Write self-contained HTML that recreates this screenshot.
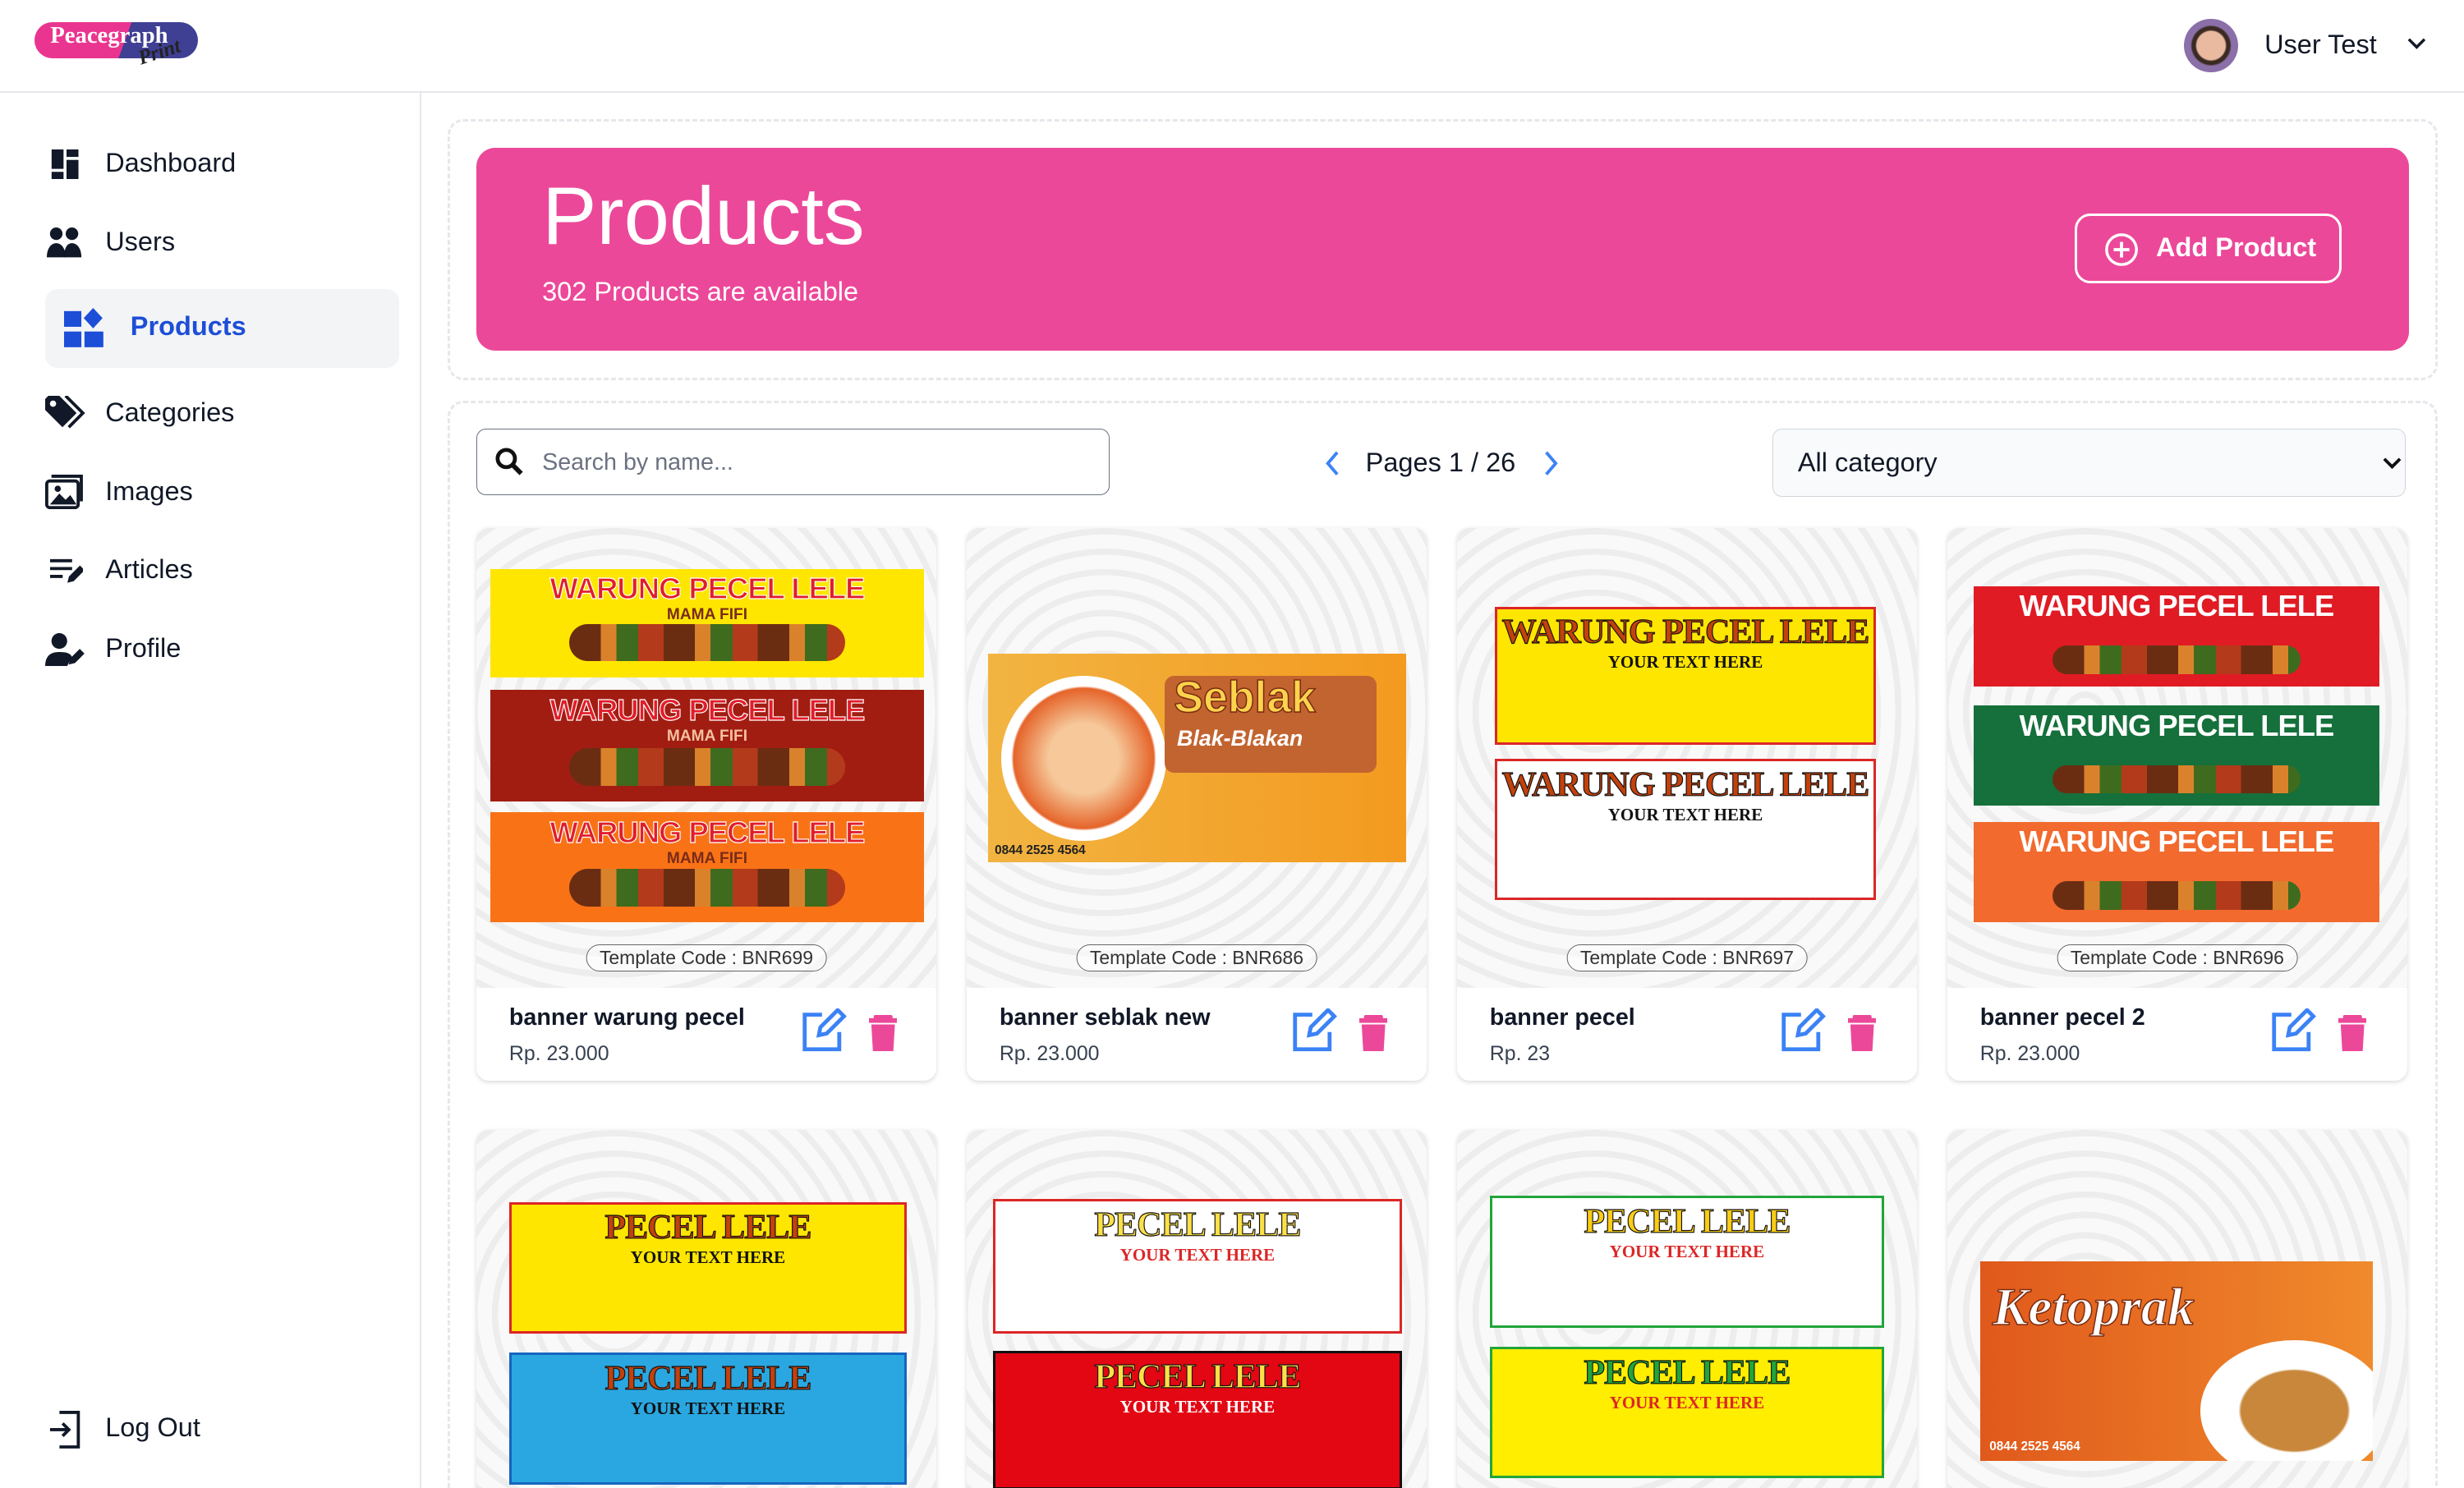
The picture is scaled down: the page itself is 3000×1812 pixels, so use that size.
<!DOCTYPE html>
<html><head><meta charset="utf-8"><style>
html,body{margin:0;padding:0;background:#fff;overflow:hidden}
#root{zoom:1.9133;width:1568px;height:947px;position:relative;overflow:hidden;font-family:"Liberation Sans",Arial,sans-serif;color:#111827}
.abs{position:absolute}
.nav{position:absolute;left:67px;font-size:17px;color:#111827}
.card{position:absolute;width:293px;height:352px;border-radius:8px;background:#fff;box-shadow:0 1px 3px rgba(0,0,0,.15);overflow:hidden}
.img{position:absolute;left:0;top:0;width:100%;height:293px;background:#f3f3f3;
background-image:repeating-radial-gradient(circle at 30% 40%,#f9f9f9 0 9px,#ededed 9px 13px)}
.pill{position:absolute;top:265px;left:50%;transform:translateX(-50%);border:1px solid #666;border-radius:10px;font-size:12px;padding:1px 8px;color:#333;white-space:nowrap;background:rgba(255,255,255,.5)}
.t{position:absolute;left:21px;top:303px;font-size:15px;font-weight:bold}
.p{position:absolute;left:21px;top:327px;font-size:13px;color:#374151}
.bn{position:absolute;overflow:hidden;text-align:center;font-weight:bold;font-family:"Liberation Sans",sans-serif}
.bn b{display:block;color:#e11d2a;font-size:19px;-webkit-text-stroke:.6px #fff;margin-top:2px;letter-spacing:-.5px}
.bn i{display:block;font-style:normal;color:#7a2b1a;font-size:10px}
.food{position:absolute;left:50px;right:50px;height:24px;bottom:10px;background:repeating-linear-gradient(90deg,#6b2d12 0 20px,#d9822b 20px 30px,#3f6b1e 30px 44px,#b33a1a 44px 60px);border-radius:12px}
.pc b{color:#c2410c;-webkit-text-stroke:.6px #111;font-size:22px;font-family:"Liberation Serif",serif}
.pc i{color:#111;font-size:11px;font-family:"Liberation Serif",serif;font-weight:bold}
</style></head><body><div id="root">
<div class="abs" style="left:0;top:58px;width:1568px;height:1px;background:#e5e7eb"></div>
<div class="abs" style="left:22px;top:14px;width:104px;height:23px;border-radius:12px;background:linear-gradient(110deg,#e9358f 0 55%,#3f3f94 55%)"></div>
<div class="abs" style="left:32px;top:14px;font-family:'Liberation Serif',serif;font-weight:bold;color:#fff;font-size:15px">Peacegraph</div>
<div class="abs" style="left:88px;top:26px;font-family:'Liberation Serif',serif;font-style:italic;font-weight:bold;color:#222;font-size:13px;transform:rotate(-18deg)">Print</div>
<div class="abs" style="left:1390px;top:12px;width:34px;height:34px;border-radius:50%;background:radial-gradient(circle at 50% 50%,#e9b9a0 0 9px,#3a2a22 10px 12px,#8b6fa8 13px)"></div>
<div class="abs" style="left:1441px;top:19px;font-size:17px">User Test</div>
<svg class="abs" style="left:1531px;top:23px" width="14" height="10" viewBox="0 0 14 10"><path d="M2 2l5 5 5-5" fill="none" stroke="#111827" stroke-width="1.8"/></svg>
<div class="abs" style="left:267px;top:59px;width:1px;height:888px;background:#e5e7eb"></div>
<svg class="abs" style="left:32px;top:95px" width="19" height="19" viewBox="0 0 18 20"><rect x="0" y="0" width="8" height="13" fill="#111827"/><rect x="10" y="0" width="8" height="5" fill="#111827"/><rect x="0" y="15" width="8" height="5" fill="#111827"/><rect x="10" y="7" width="8" height="13" fill="#111827"/></svg>
<div class="nav" style="top:94px">Dashboard</div>
<svg class="abs" style="left:30px;top:145px" width="23" height="19" viewBox="0 0 23 19"><circle cx="6" cy="4" r="4" fill="#111827"/><circle cx="16" cy="4" r="4" fill="#111827"/><path d="M0 19c0-6 3-9 6-9s6 3 6 9z" fill="#111827"/><path d="M11 19c0-6 2-9 5-9s6 3 6 9z" fill="#111827"/></svg>
<div class="nav" style="top:144px">Users</div>
<div class="abs" style="left:29px;top:184px;width:225px;height:50px;border-radius:8px;background:#f3f4f6"></div>
<svg class="abs" style="left:41px;top:196px" width="25" height="25" viewBox="0 0 25 25"><rect x="0" y="2" width="11" height="10" fill="#1d4ed8"/><rect x="0" y="15" width="11" height="10" fill="#1d4ed8"/><rect x="13" y="15" width="12" height="10" fill="#1d4ed8"/><path d="M18.5 0l6 6.5-6 6.5-6-6.5z" fill="#1d4ed8"/></svg>
<div class="nav" style="top:198px;left:83px;color:#1d4ed8;font-weight:bold">Products</div>
<svg class="abs" style="left:29px;top:252px" width="26" height="22" viewBox="0 0 26 22"><path d="M0 2v7l11 11 9-9L9 0H2z" fill="#111827"/><path d="M13 0l11 11-9 9" fill="none" stroke="#111827" stroke-width="2"/><circle cx="5" cy="5" r="2" fill="#fff"/></svg>
<div class="nav" style="top:253px">Categories</div>
<svg class="abs" style="left:29px;top:302px" width="25" height="22" viewBox="0 0 25 22"><rect x="1" y="4" width="20" height="17" rx="2" fill="none" stroke="#111827" stroke-width="2"/><path d="M4 1h19v16" fill="none" stroke="#111827" stroke-width="2"/><path d="M3 19l6-7 4 4 3-3 4 6z" fill="#111827"/><circle cx="8" cy="9" r="2" fill="#111827"/></svg>
<div class="nav" style="top:303px">Images</div>
<svg class="abs" style="left:32px;top:355px" width="21" height="17" viewBox="0 0 21 17"><path d="M0 2h14M0 7h14M0 12h8" stroke="#111827" stroke-width="2"/><path d="M11 16l1-4 7-7 3 3-7 7z" fill="#111827"/></svg>
<div class="nav" style="top:353px">Articles</div>
<svg class="abs" style="left:29px;top:403px" width="26" height="21" viewBox="0 0 26 21"><circle cx="9" cy="5" r="5" fill="#111827"/><path d="M0 21c0-7 4-9 9-9s7 1 8 3l-3 6z" fill="#111827"/><path d="M15 20l1-4 6-6 3 3-6 6z" fill="#111827"/></svg>
<div class="nav" style="top:403px">Profile</div>
<svg class="abs" style="left:31px;top:898px" width="20" height="24" viewBox="0 0 20 24"><path d="M7 1h12v22H7" fill="none" stroke="#111827" stroke-width="2"/><path d="M1 12h12M9 8l4 4-4 4" fill="none" stroke="#111827" stroke-width="2"/></svg>
<div class="nav" style="top:899px">Log Out</div>
<div class="abs" style="left:285px;top:76px;width:1263px;height:163px;border:2px dashed #e5e7eb;border-radius:10px"></div>
<div class="abs" style="left:303px;top:94px;width:1230px;height:129px;border-radius:12px;background:#ec4899"></div>
<div class="abs" style="left:345px;top:108px;color:#fff;font-size:52px">Products</div>
<div class="abs" style="left:345px;top:176px;color:#fff;font-size:17px">302 Products are available</div>
<div class="abs" style="left:1320px;top:136px;width:167px;height:41px;border:2px solid #fff;border-radius:10px"></div>
<svg class="abs" style="left:1339px;top:148px" width="22" height="22" viewBox="0 0 22 22"><circle cx="11" cy="11" r="9.5" fill="none" stroke="#fff" stroke-width="1.8"/><path d="M11 6v10M6 11h10" stroke="#fff" stroke-width="2"/></svg>
<div class="abs" style="left:1372px;top:148px;color:#fff;font-size:17px;font-weight:bold">Add Product</div>
<div class="abs" style="left:285px;top:255px;width:1263px;height:720px;border:2px dashed #e5e7eb;border-radius:10px"></div>
<div class="abs" style="left:303px;top:273px;width:402px;height:41px;border:1px solid #6b7280;border-radius:6px"></div>
<svg class="abs" style="left:315px;top:285px" width="18" height="18" viewBox="0 0 18 18"><circle cx="7" cy="7" r="5.5" fill="none" stroke="#111" stroke-width="2.5"/><path d="M11 11l5.5 5.5" stroke="#111" stroke-width="3"/></svg>
<div class="abs" style="left:345px;top:286px;font-size:15px;color:#6b7280">Search by name...</div>
<svg class="abs" style="left:841px;top:286px" width="14" height="18" viewBox="0 0 14 18"><path d="M10 2L4 9l6 7" fill="none" stroke="#3b82f6" stroke-width="2"/></svg>
<div class="abs" style="left:869px;top:285px;font-size:17px">Pages 1 / 26</div>
<svg class="abs" style="left:980px;top:286px" width="14" height="18" viewBox="0 0 14 18"><path d="M4 2l6 7-6 7" fill="none" stroke="#3b82f6" stroke-width="2"/></svg>
<div class="abs" style="left:1128px;top:273px;width:402px;height:42px;border:1px solid #d1d5db;border-radius:6px;background:#f9fafb"></div>
<div class="abs" style="left:1144px;top:285px;font-size:17px">All category</div>
<svg class="abs" style="left:1516px;top:290px" width="12" height="9" viewBox="0 0 12 9"><path d="M1 2l5 5 5-5" fill="none" stroke="#111" stroke-width="2"/></svg>

<div class="card" style="left:303px;top:336px"><div class="img">
 <div class="bn" style="left:9px;top:26px;width:276px;height:69px;background:#ffe600"><b>WARUNG PECEL LELE</b><i>MAMA FIFI</i><div class="food"></div></div>
 <div class="bn" style="left:9px;top:103px;width:276px;height:71px;background:#a11d12"><b>WARUNG PECEL LELE</b><i style="color:#f5c0a0">MAMA FIFI</i><div class="food"></div></div>
 <div class="bn" style="left:9px;top:181px;width:276px;height:70px;background:#f97316"><b>WARUNG PECEL LELE</b><i>MAMA FIFI</i><div class="food"></div></div>
 <div class="pill">Template Code : BNR699</div></div>
 <div class="t">banner warung pecel</div><div class="p">Rp. 23.000</div></div>

<div class="card" style="left:615px;top:336px"><div class="img">
 <div class="bn" style="left:14px;top:80px;width:266px;height:133px;background:linear-gradient(90deg,#f2b441,#f39a1f)"><div class="abs" style="left:8px;top:14px;width:105px;height:105px;border-radius:50%;background:radial-gradient(#f6c89a 0 30%,#e5642a 60%,#fff 62%)"></div><div class="abs" style="left:112px;top:14px;width:135px;height:62px;background:#c2642f;border-radius:6px"></div><div class="abs" style="left:118px;top:12px;color:#fcd34d;font-size:28px;-webkit-text-stroke:.8px #7c2d12">Seblak</div><div class="abs" style="left:120px;top:46px;color:#fff;font-size:14px;font-style:italic">Blak-Blakan</div><div class="abs" style="left:4px;top:121px;font-size:8px;color:#222">0844 2525 4564</div></div>
 <div class="pill">Template Code : BNR686</div></div>
 <div class="t">banner seblak new</div><div class="p">Rp. 23.000</div></div>

<div class="card" style="left:927px;top:336px"><div class="img">
 <div class="bn pc" style="left:24px;top:50px;width:243px;height:88px;background:#ffe600;border:2px solid #dc2626;box-sizing:border-box"><b>WARUNG PECEL LELE</b><i>YOUR TEXT HERE</i></div>
 <div class="bn pc" style="left:24px;top:147px;width:243px;height:90px;background:#fff;border:2px solid #dc2626;box-sizing:border-box"><b>WARUNG PECEL LELE</b><i>YOUR TEXT HERE</i></div>
 <div class="pill">Template Code : BNR697</div></div>
 <div class="t">banner pecel</div><div class="p">Rp. 23</div></div>

<div class="card" style="left:1239px;top:336px"><div class="img">
 <div class="bn" style="left:17px;top:37px;width:258px;height:64px;background:#e01b24"><b style="color:#fff;-webkit-text-stroke:0">WARUNG PECEL LELE</b><div class="food" style="bottom:8px;height:18px"></div></div>
 <div class="bn" style="left:17px;top:113px;width:258px;height:64px;background:#15703b"><b style="color:#fff;-webkit-text-stroke:0">WARUNG PECEL LELE</b><div class="food" style="bottom:8px;height:18px"></div></div>
 <div class="bn" style="left:17px;top:187px;width:258px;height:64px;background:#f26a2e"><b style="color:#fff;-webkit-text-stroke:0">WARUNG PECEL LELE</b><div class="food" style="bottom:8px;height:18px"></div></div>
 <div class="pill">Template Code : BNR696</div></div>
 <div class="t">banner pecel 2</div><div class="p">Rp. 23.000</div></div>

<div class="card" style="left:303px;top:719px"><div class="img">
 <div class="bn pc" style="left:21px;top:46px;width:253px;height:84px;background:#ffe600;border:2px solid #dc2626;box-sizing:border-box"><b>PECEL LELE</b><i>YOUR TEXT HERE</i></div>
 <div class="bn pc" style="left:21px;top:142px;width:253px;height:84px;background:#2aa7e0;border:2px solid #1565c0;box-sizing:border-box"><b>PECEL LELE</b><i>YOUR TEXT HERE</i></div></div></div>
<div class="card" style="left:615px;top:719px"><div class="img">
 <div class="bn pc" style="left:17px;top:44px;width:260px;height:86px;background:#fff;border:2px solid #dc2626;box-sizing:border-box"><b style="color:#fde047">PECEL LELE</b><i style="color:#dc2626">YOUR TEXT HERE</i></div>
 <div class="bn pc" style="left:17px;top:141px;width:260px;height:88px;background:#e30613;border:2px solid #111;box-sizing:border-box"><b style="color:#fde047">PECEL LELE</b><i style="color:#fff">YOUR TEXT HERE</i></div></div></div>
<div class="card" style="left:927px;top:719px"><div class="img">
 <div class="bn pc" style="left:21px;top:42px;width:251px;height:84px;background:#fff;border:2px solid #22a53a;box-sizing:border-box"><b style="color:#facc15">PECEL LELE</b><i style="color:#dc2626">YOUR TEXT HERE</i></div>
 <div class="bn pc" style="left:21px;top:138px;width:251px;height:84px;background:#ffee00;border:2px solid #22a53a;box-sizing:border-box"><b style="color:#22a53a">PECEL LELE</b><i style="color:#dc2626">YOUR TEXT HERE</i></div></div></div>
<div class="card" style="left:1239px;top:719px"><div class="img">
 <div class="bn" style="left:21px;top:84px;width:250px;height:127px;background:linear-gradient(90deg,#e0591c,#f08a2c)"><div class="abs" style="left:8px;top:10px;color:#fff;font-size:34px;font-style:italic;font-family:'Liberation Serif',serif;-webkit-text-stroke:.8px #7c2d12">Ketoprak</div><div class="abs" style="left:140px;top:50px;width:120px;height:90px;border-radius:50%;background:radial-gradient(#c8873a 0 40%,#fff 42%)"></div><div class="abs" style="left:6px;top:113px;color:#fff;font-size:8px">0844 2525 4564</div></div></div></div>

<svg class="abs" style="left:509px;top:642px" width="30" height="28" viewBox="0 0 30 28"><path d="M14 4H3v22h22V15" fill="none" stroke="#3b82f6" stroke-width="2.5"/><path d="M12 17l1-5 11-11 4 4-11 11z" fill="none" stroke="#3b82f6" stroke-width="2.5"/></svg>
<svg class="abs" style="left:553px;top:646px" width="18" height="24" viewBox="0 0 18 24"><rect x="3" y="0" width="12" height="3" rx="1" fill="#ec4899"/><rect x="0" y="2" width="18" height="3" fill="#ec4899"/><path d="M1.5 6h15l-1 17h-13z" fill="#ec4899"/></svg>
<svg class="abs" style="left:821px;top:642px" width="30" height="28" viewBox="0 0 30 28"><path d="M14 4H3v22h22V15" fill="none" stroke="#3b82f6" stroke-width="2.5"/><path d="M12 17l1-5 11-11 4 4-11 11z" fill="none" stroke="#3b82f6" stroke-width="2.5"/></svg>
<svg class="abs" style="left:865px;top:646px" width="18" height="24" viewBox="0 0 18 24"><rect x="3" y="0" width="12" height="3" rx="1" fill="#ec4899"/><rect x="0" y="2" width="18" height="3" fill="#ec4899"/><path d="M1.5 6h15l-1 17h-13z" fill="#ec4899"/></svg>
<svg class="abs" style="left:1132px;top:642px" width="30" height="28" viewBox="0 0 30 28"><path d="M14 4H3v22h22V15" fill="none" stroke="#3b82f6" stroke-width="2.5"/><path d="M12 17l1-5 11-11 4 4-11 11z" fill="none" stroke="#3b82f6" stroke-width="2.5"/></svg>
<svg class="abs" style="left:1176px;top:646px" width="18" height="24" viewBox="0 0 18 24"><rect x="3" y="0" width="12" height="3" rx="1" fill="#ec4899"/><rect x="0" y="2" width="18" height="3" fill="#ec4899"/><path d="M1.5 6h15l-1 17h-13z" fill="#ec4899"/></svg>
<svg class="abs" style="left:1444px;top:642px" width="30" height="28" viewBox="0 0 30 28"><path d="M14 4H3v22h22V15" fill="none" stroke="#3b82f6" stroke-width="2.5"/><path d="M12 17l1-5 11-11 4 4-11 11z" fill="none" stroke="#3b82f6" stroke-width="2.5"/></svg>
<svg class="abs" style="left:1488px;top:646px" width="18" height="24" viewBox="0 0 18 24"><rect x="3" y="0" width="12" height="3" rx="1" fill="#ec4899"/><rect x="0" y="2" width="18" height="3" fill="#ec4899"/><path d="M1.5 6h15l-1 17h-13z" fill="#ec4899"/></svg>
</div></body></html>
